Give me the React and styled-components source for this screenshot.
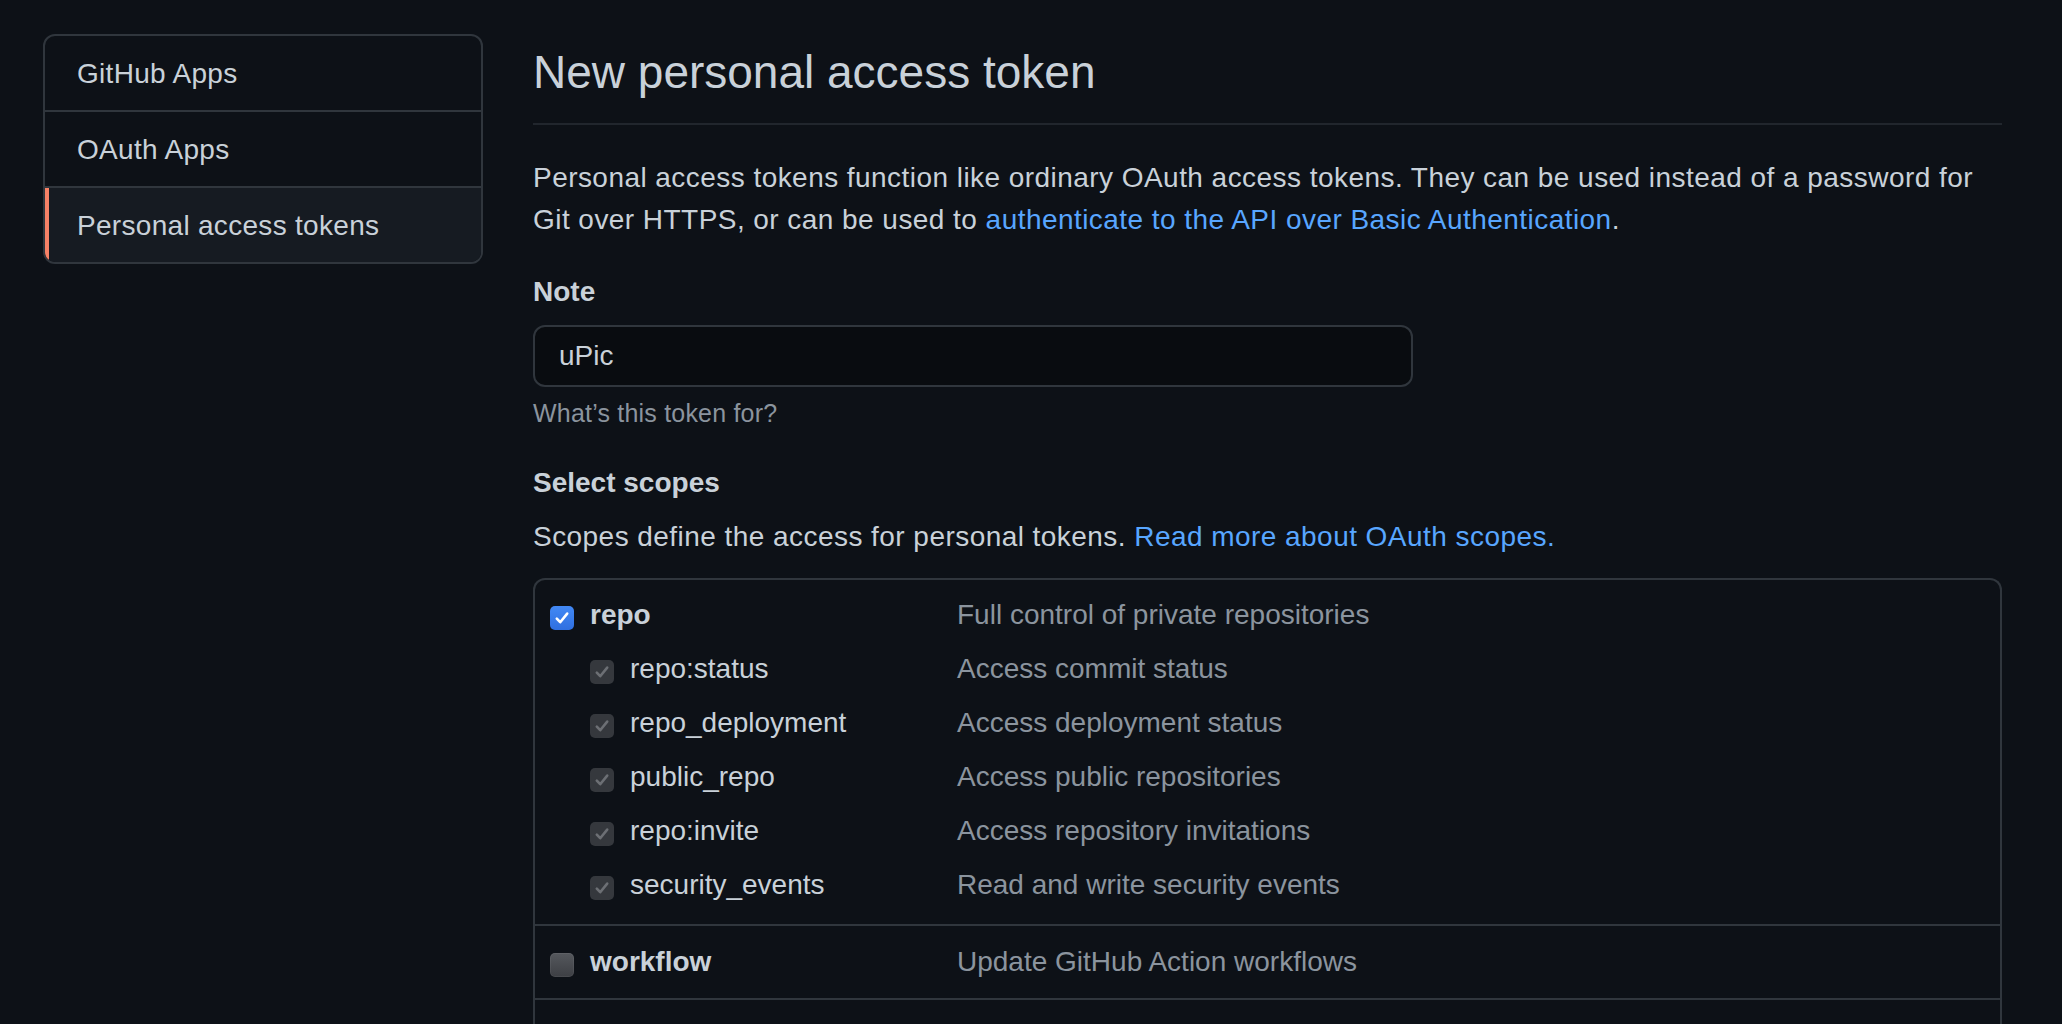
import React from "react";
import styled, { createGlobalStyle } from "styled-components";

const GlobalStyle = createGlobalStyle`
  html, body {
    margin: 0;
    padding: 0;
    background: #0d1117;
    overflow: hidden;
  }
  body {
    font-family: "Liberation Sans", Arial, sans-serif;
    color: #c9d1d9;
  }
  * { box-sizing: border-box; }
`;

const Page = styled.div`
  display: flex;
  align-items: flex-start;
  gap: 50px;
  padding: 34px 60px 0 43px;
  min-height: 1024px;
`;

const SideNav = styled.nav`
  width: 440px;
  flex: none;
  border: 2px solid #30363d;
  border-radius: 12px;
  overflow: hidden;
  display: flex;
  flex-direction: column;
`;

const NavItem = styled.a`
  display: block;
  padding: 17px 32px 15px;
  font-size: 28px;
  line-height: 42px;
  letter-spacing: 0.3px;
  color: #c9d1d9;
  text-decoration: none;
  background: ${(p) => (p.$active ? "#161b22" : "transparent")};
  box-shadow: ${(p) => (p.$active ? "inset 4px 0 0 #f78166" : "none")};
  & + & {
    border-top: 2px solid #30363d;
  }
`;

const Main = styled.main`
  width: 1469px;
  flex: none;
`;

const Subhead = styled.div`
  margin-top: 4px;
  padding-bottom: 16px;
  border-bottom: 2px solid #21262d;
`;

const Title = styled.h2`
  margin: 0;
  font-size: 46px;
  line-height: 69px;
  font-weight: 400;
  color: #c9d1d9;
`;

const Para = styled.p`
  margin: ${(p) => p.$mt || 0}px 0 0;
  font-size: 28px;
  line-height: 42px;
  letter-spacing: 0.45px;
  color: #c9d1d9;
`;

const Link = styled.a`
  color: #58a6ff;
  text-decoration: none;
`;

const Label = styled.div`
  margin-top: 30px;
  font-size: 28px;
  line-height: 42px;
  font-weight: 700;
  color: #c9d1d9;
`;

const TextInput = styled.input`
  display: block;
  margin-top: 12px;
  width: 880px;
  height: 62px;
  padding: 0 24px;
  background: #090c10;
  border: 2px solid #30363d;
  border-radius: 12px;
  font-family: inherit;
  font-size: 28px;
  color: #c9d1d9;
  outline: none;
`;

const Note = styled.p`
  margin: 7px 0 0;
  font-size: 25px;
  line-height: 38px;
  letter-spacing: 0.2px;
  color: #8b949e;
`;

const ScopeTable = styled.div`
  margin-top: 20px;
  border: 2px solid #30363d;
  border-bottom: none;
  border-radius: 12px 12px 0 0;
`;

const ScopeGroup = styled.div`
  padding: ${(p) => (p.$first ? "8px 15px 12px" : "9px 15px")};
  border-top: ${(p) => (p.$first ? "none" : "2px solid #30363d")};
`;

const ScopeRow = styled.div`
  display: grid;
  grid-template-columns: 407px 1fr;
  align-items: center;
  height: 54px;
`;

const ScopeName = styled.label`
  display: flex;
  align-items: center;
  gap: 16px;
  padding-left: ${(p) => (p.$sub ? 40 : 0)}px;
  font-size: 28px;
  line-height: 42px;
  font-weight: ${(p) => (p.$sub ? 400 : 700)};
  color: #c9d1d9;
`;

const ScopeDesc = styled.span`
  font-size: 28px;
  line-height: 42px;
  color: #8b949e;
`;

const Box = styled.span`
  flex: none;
  width: 24px;
  height: 24px;
  margin-top: 6px;
  border-radius: 5px;
  display: flex;
  align-items: center;
  justify-content: center;
  background: ${(p) =>
    p.$state === "on"
      ? "linear-gradient(#4289f5, #2f6fe0)"
      : p.$state === "disabled"
      ? "#35383d"
      : "linear-gradient(#55585d, #3d3f44)"};
  box-shadow: ${(p) =>
    p.$state === "off" ? "inset 0 0 0 1px rgba(255,255,255,0.06)" : "none"};
`;

const Check = ({ color }) => (
  <svg width="18" height="18" viewBox="0 0 18 18" fill="none">
    <path
      d="M3.8 9.6l3.4 3.6 7-8.6"
      stroke={color}
      strokeWidth="2.6"
      strokeLinecap="round"
      strokeLinejoin="round"
    />
  </svg>
);

const Checkbox = ({ state }) => (
  <Box $state={state}>
    {state === "on" && <Check color="#ffffff" />}
    {state === "disabled" && <Check color="#6c6f74" />}
  </Box>
);

const groups = [
  [
    { name: "repo", desc: "Full control of private repositories", state: "on" },
    { name: "repo:status", desc: "Access commit status", state: "disabled", sub: true },
    { name: "repo_deployment", desc: "Access deployment status", state: "disabled", sub: true },
    { name: "public_repo", desc: "Access public repositories", state: "disabled", sub: true },
    { name: "repo:invite", desc: "Access repository invitations", state: "disabled", sub: true },
    { name: "security_events", desc: "Read and write security events", state: "disabled", sub: true },
  ],
  [{ name: "workflow", desc: "Update GitHub Action workflows", state: "off" }],
  [
    { name: "write:packages", desc: "Upload packages to GitHub Package Registry", state: "off" },
    { name: "read:packages", desc: "Download packages from GitHub Package Registry", state: "off", sub: true },
  ],
];

export default function App() {
  return (
    <>
      <GlobalStyle />
      <Page>
        <SideNav>
          <NavItem href="#">GitHub Apps</NavItem>
          <NavItem href="#">OAuth Apps</NavItem>
          <NavItem href="#" $active>
            Personal access tokens
          </NavItem>
        </SideNav>
        <Main>
          <Subhead>
            <Title>New personal access token</Title>
          </Subhead>
          <Para $mt={32}>
            Personal access tokens function like ordinary OAuth access tokens. They can be used
            instead of a password for Git over HTTPS, or can be used to{" "}
            <Link href="#">authenticate to the API over Basic Authentication</Link>.
          </Para>
          <Label>Note</Label>
          <TextInput type="text" defaultValue="uPic" />
          <Note>What’s this token for?</Note>
          <Label>Select scopes</Label>
          <Para $mt={12}>
            Scopes define the access for personal tokens.{" "}
            <Link href="#">Read more about OAuth scopes.</Link>
          </Para>
          <ScopeTable>
            {groups.map((g, gi) => (
              <ScopeGroup key={gi} $first={gi === 0}>
                {g.map((s) => (
                  <ScopeRow key={s.name}>
                    <ScopeName $sub={s.sub}>
                      <Checkbox state={s.state} />
                      {s.name}
                    </ScopeName>
                    <ScopeDesc>{s.desc}</ScopeDesc>
                  </ScopeRow>
                ))}
              </ScopeGroup>
            ))}
          </ScopeTable>
        </Main>
      </Page>
    </>
  );
}
